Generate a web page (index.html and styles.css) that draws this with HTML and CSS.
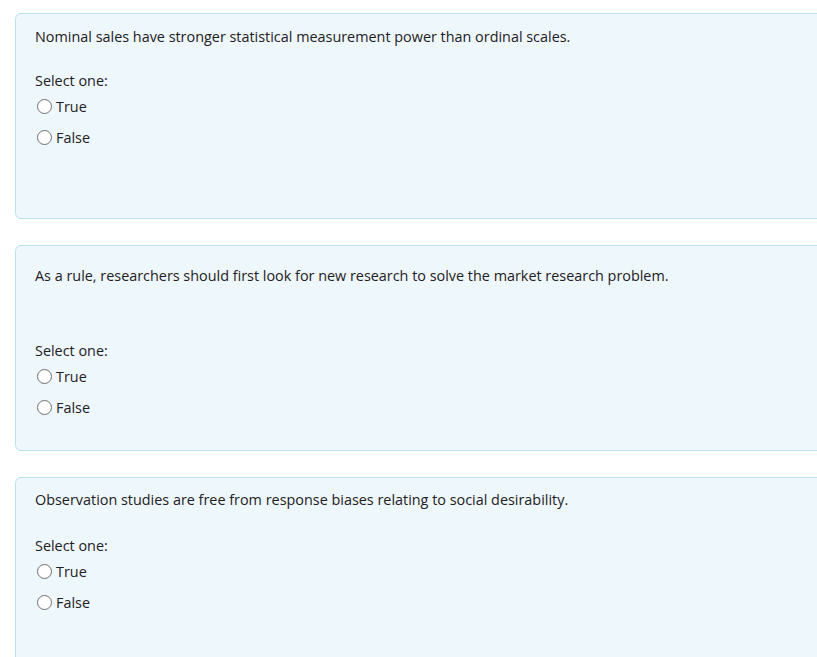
FILE: index.html
```html
<!DOCTYPE html>
<html>
<head>
<meta charset="utf-8">
<link rel="stylesheet" href="styles.css">
</head>
<body>
<main class="quiz">
  <section class="card">
    <p class="question">Nominal sales have stronger statistical measurement power than ordinal scales.</p>
    <div class="prompt">Select one:</div>
    <label class="option"><span class="radio"></span>True</label>
    <label class="option"><span class="radio"></span>False</label>
  </section>
  <section class="card card-wide">
    <p class="question">As a rule, researchers should first look for new research to solve the market research problem.</p>
    <div class="prompt">Select one:</div>
    <label class="option"><span class="radio"></span>True</label>
    <label class="option"><span class="radio"></span>False</label>
  </section>
  <section class="card card-tight">
    <p class="question">Observation studies are free from response biases relating to social desirability.</p>
    <div class="prompt">Select one:</div>
    <label class="option"><span class="radio"></span>True</label>
    <label class="option"><span class="radio"></span>False</label>
  </section>
</main>
</body>
</html>
```
FILE: styles.css
```css
html, body {
  margin: 0;
  padding: 0;
  background: #ffffff;
  overflow: hidden;
}
body {
  font-family: "Open Sans", "Noto Sans", sans-serif;
  font-size: 14.4px;
  color: #1d2125;
}
.quiz {
  padding: 13px 0 0 15px;
  display: flex;
  flex-direction: column;
  gap: 26px;
}
.card {
  width: 830px;
  height: 206px;
  box-sizing: border-box;
  background: #eef7fb;
  border: 1px solid #b8e2ef;
  border-radius: 6px;
  padding: 13px 19px 0;
}
.question {
  margin: 0 0 24px;
  line-height: 20px;
}
.card-wide { padding-top: 20px; }
.card-wide .question { margin-bottom: 55px; }
.card-tight { padding-top: 12px; }
.card-tight .question { margin-bottom: 26px; }
.prompt {
  line-height: 20px;
}
.option {
  display: flex;
  align-items: center;
  height: 31px;
  padding-left: 2px;
}
.radio {
  width: 13px;
  height: 13px;
  border: 1px solid #6f6f6f;
  border-radius: 50%;
  background: #ffffff;
  margin-right: 4px;
  box-sizing: content-box;
}
```
